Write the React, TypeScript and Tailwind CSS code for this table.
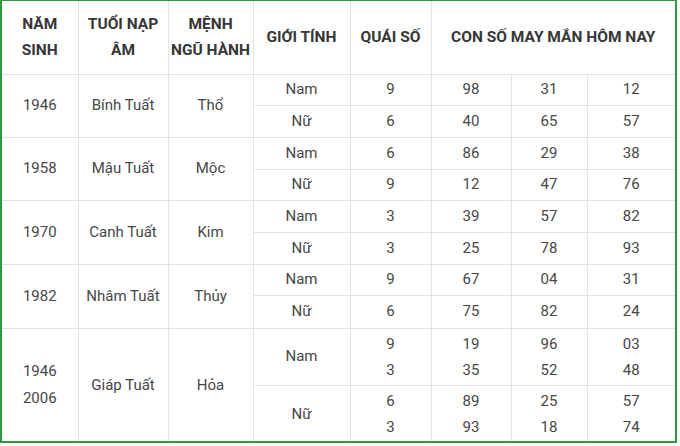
import React from "react";

type Sub = { g: string; q: string; n: [string, string, string] };
type Group = { year: string[]; nap: string; menh: string; subs: Sub[]; h: [string, string] };

const groups: Group[] = [
  { year: ["1946"], nap: "Bính Tuất", menh: "Thổ", h: ["h-[31px]", "h-[32px]"], subs: [
    { g: "Nam", q: "9", n: ["98", "31", "12"] },
    { g: "Nữ", q: "6", n: ["40", "65", "57"] },
  ] },
  { year: ["1958"], nap: "Mậu Tuất", menh: "Mộc", h: ["h-[32px]", "h-[31px]"], subs: [
    { g: "Nam", q: "6", n: ["86", "29", "38"] },
    { g: "Nữ", q: "9", n: ["12", "47", "76"] },
  ] },
  { year: ["1970"], nap: "Canh Tuất", menh: "Kim", h: ["h-[32px]", "h-[32px]"], subs: [
    { g: "Nam", q: "3", n: ["39", "57", "82"] },
    { g: "Nữ", q: "3", n: ["25", "78", "93"] },
  ] },
  { year: ["1982"], nap: "Nhâm Tuất", menh: "Thủy", h: ["h-[31px]", "h-[33px]"], subs: [
    { g: "Nam", q: "9", n: ["67", "04", "31"] },
    { g: "Nữ", q: "6", n: ["75", "82", "24"] },
  ] },
];

const cell = "border border-[#e3e3e3] text-center align-middle p-0";

function Multi({ a, b }: { a: string; b: string }) {
  return (
    <div className="leading-[26px]">
      <div>{a}</div>
      <div>{b}</div>
    </div>
  );
}

export default function App() {
  return (
    <div className="w-[680px] h-[446px] bg-white">
      <div className="w-[677px] h-[443px] border-l-2 border-r-2 border-b-2 border-t border-[#2f9a40] bg-white overflow-hidden">
        <table
          className="table-fixed border-collapse border-hidden w-[673px] text-[15px] text-[#474747]"
          style={{ fontFamily: "Roboto, 'Noto Sans', sans-serif" }}
        >
          <colgroup>
            <col className="w-[76px]" />
            <col className="w-[90px]" />
            <col className="w-[85px]" />
            <col className="w-[97px]" />
            <col className="w-[81px]" />
            <col className="w-[80px]" />
            <col className="w-[76px]" />
            <col className="w-[88px]" />
          </colgroup>
          <thead>
            <tr className="h-[73px] font-bold text-[#363636] text-[15.5px] leading-[26px]">
              <th className={cell}>NĂM<br />SINH</th>
              <th className={cell}>TUỔI NẠP<br />ÂM</th>
              <th className={cell}>MỆNH<br />NGŨ HÀNH</th>
              <th className={cell}>GIỚI TÍNH</th>
              <th className={cell}>QUÁI SỐ</th>
              <th className={cell} colSpan={3}>CON SỐ MAY MẮN HÔM NAY</th>
            </tr>
          </thead>
          <tbody>
            {groups.map((g) =>
              g.subs.map((s, i) => (
                <tr key={g.year[0] + g.nap + i} className={g.h[i]}>
                  {i === 0 && (
                    <>
                      <td className={cell} rowSpan={2}>{g.year[0]}</td>
                      <td className={cell} rowSpan={2}>{g.nap}</td>
                      <td className={cell} rowSpan={2}>{g.menh}</td>
                    </>
                  )}
                  <td className={cell}>{s.g}</td>
                  <td className={cell}>{s.q}</td>
                  <td className={cell}>{s.n[0]}</td>
                  <td className={cell}>{s.n[1]}</td>
                  <td className={cell}>{s.n[2]}</td>
                </tr>
              ))
            )}
            <tr className="h-[57px]">
              <td className={cell} rowSpan={2}>
                <div className="leading-[27px]">
                  <div>1946</div>
                  <div>2006</div>
                </div>
              </td>
              <td className={cell} rowSpan={2}>Giáp Tuất</td>
              <td className={cell} rowSpan={2}>Hỏa</td>
              <td className={cell}>Nam</td>
              <td className={cell}><Multi a="9" b="3" /></td>
              <td className={cell}><Multi a="19" b="35" /></td>
              <td className={cell}><Multi a="96" b="52" /></td>
              <td className={cell}><Multi a="03" b="48" /></td>
            </tr>
            <tr className="h-[57px]">
              <td className={cell}>Nữ</td>
              <td className={cell}><Multi a="6" b="3" /></td>
              <td className={cell}><Multi a="89" b="93" /></td>
              <td className={cell}><Multi a="25" b="18" /></td>
              <td className={cell}><Multi a="57" b="74" /></td>
            </tr>
          </tbody>
        </table>
      </div>
    </div>
  );
}
